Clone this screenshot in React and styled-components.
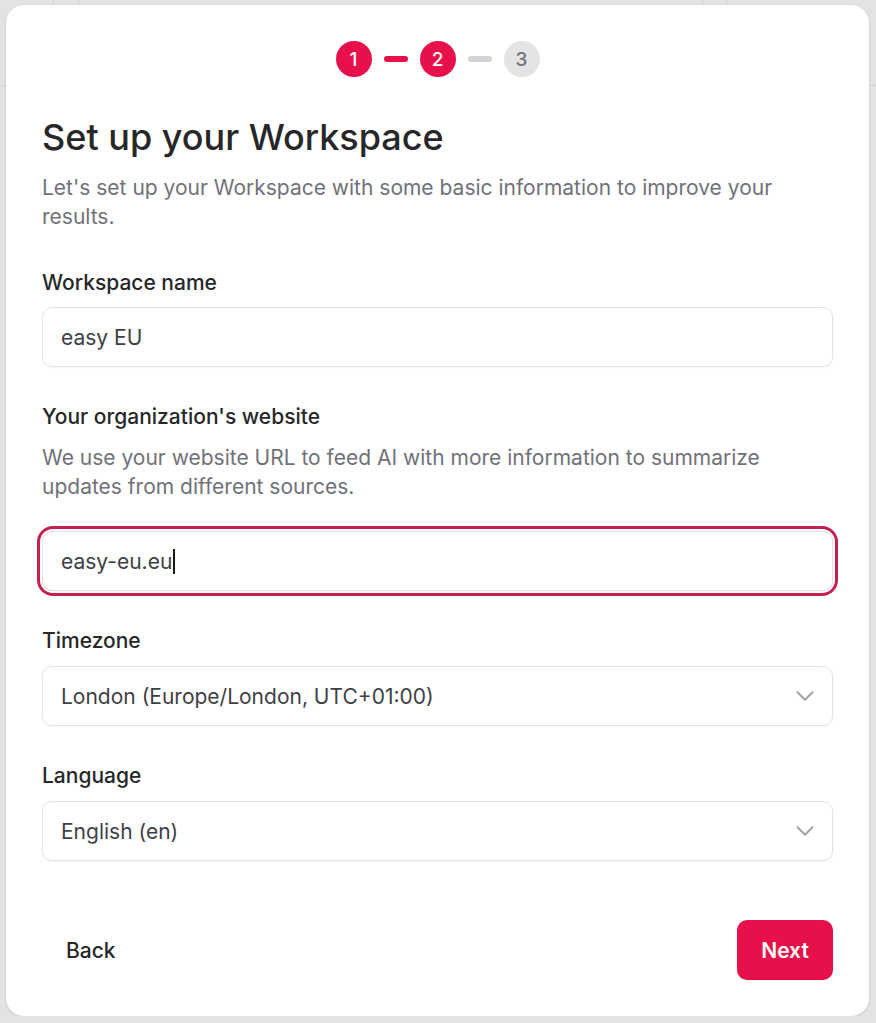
import React, { useState } from 'react';
import styled, { createGlobalStyle } from 'styled-components';
import { ChevronDown } from 'lucide-react';

const GlobalStyle = createGlobalStyle`
  * {
    box-sizing: border-box;
  }

  body {
    margin: 0;
    font-family: 'Inter', 'Noto Sans', sans-serif;
    color: #27272a;
    /* faint grid of the app behind the dialog */
    background-color: #e3e3e3;
    background-image:
      linear-gradient(#d2d2d2, #d2d2d2),
      linear-gradient(#d2d2d2, #d2d2d2),
      linear-gradient(#d2d2d2, #d2d2d2),
      linear-gradient(#d2d2d2, #d2d2d2),
      linear-gradient(#d2d2d2, #d2d2d2);
    background-size: 1px 85px, 1px 85px, 1px 85px, 1px 85px, 100% 1px;
    background-position: 53px 0, 78px 0, 702px 0, 726px 0, 0 85px;
    background-repeat: no-repeat;
  }
`;

const steps = [1, 2, 3];
const currentStep = 2;

const Page = () => {
  const [website, setWebsite] = useState('easy-eu.eu');
  const [name, setName] = useState('easy EU');

  return (
    <>
      <GlobalStyle />
      <Card>
        <Stepper>
          {steps.map((step, index) => (
            <React.Fragment key={step}>
              {index > 0 && <StepDash done={step <= currentStep} />}
              <StepDot done={step <= currentStep}>{step}</StepDot>
            </React.Fragment>
          ))}
        </Stepper>

        <Title>Set up your Workspace</Title>
        <Subtitle>
          Let's set up your Workspace with some basic information to improve your results.
        </Subtitle>

        <Form>
          <Field>
            <Label>Workspace name</Label>
            <Input value={name} onChange={(e) => setName(e.target.value)} />
          </Field>

          <Field>
            <Label>Your organization's website</Label>
            <Hint>
              We use your website URL to feed AI with more information to summarize updates from
              different sources.
            </Hint>
            <InputWrap focused>
              <Input value={website} onChange={(e) => setWebsite(e.target.value)} />
              <Caret />
            </InputWrap>
          </Field>

          <Field>
            <Label>Timezone</Label>
            <Select>
              <span>London (Europe/London, UTC+01:00)</span>
              <ChevronDown size={30} strokeWidth={1.5} color="#a1a1aa" />
            </Select>
          </Field>

          <Field>
            <Label>Language</Label>
            <Select>
              <span>English (en)</span>
              <ChevronDown size={30} strokeWidth={1.5} color="#a1a1aa" />
            </Select>
          </Field>
        </Form>

        <Footer>
          <GhostButton>Back</GhostButton>
          <PrimaryButton>Next</PrimaryButton>
        </Footer>
      </Card>
    </>
  );
};

const Card = styled.div`
  margin: 5px 0 0 6px;
  width: 863px;
  height: 1011px;
  background: #ffffff;
  border-radius: 18px;
  box-shadow: 0 1px 3px rgba(0, 0, 0, 0.12);
  padding: 36px;
  display: flex;
  flex-direction: column;
`;

const Stepper = styled.div`
  display: flex;
  justify-content: center;
  align-items: center;
  gap: 12px;
  margin-bottom: 38px;
`;

const StepDot = styled.div`
  width: 36px;
  height: 36px;
  border-radius: 50%;
  display: flex;
  align-items: center;
  justify-content: center;
  font-size: 19px;
  font-weight: 500;
  background: ${(props) => (props.done ? '#e8104a' : '#e4e4e7')};
  color: ${(props) => (props.done ? '#ffffff' : '#71717a')};
`;

const StepDash = styled.div`
  width: 24px;
  height: 6px;
  border-radius: 3px;
  background: ${(props) => (props.done ? '#e8104a' : '#d4d4d8')};
`;

const Title = styled.h1`
  margin: 0;
  font-size: 36px;
  line-height: 44px;
  font-weight: 500;
  color: #27272a;
`;

const Subtitle = styled.p`
  margin: 13.5px 0 0;
  font-size: 21px;
  line-height: 29px;
  color: #71717a;
`;

const Form = styled.div`
  margin-top: 38.5px;
  display: flex;
  flex-direction: column;
  gap: 36px;
`;

const Field = styled.div`
  display: flex;
  flex-direction: column;
`;

const Label = styled.label`
  font-size: 21px;
  line-height: 28px;
  font-weight: 500;
  color: #27272a;
  margin-bottom: 10px;
`;

const Hint = styled.p`
  margin: 1.5px 0 30.5px;
  font-size: 21px;
  line-height: 29px;
  color: #71717a;
`;

const InputWrap = styled.div`
  position: relative;
  border-radius: 11px;
  box-shadow: ${(props) =>
    props.focused ? '0 0 0 2px #ffffff, 0 0 0 5px #c51f4f' : 'none'};
`;

const Input = styled.input`
  width: 100%;
  height: 60px;
  border: 1px solid #e4e4e7;
  border-radius: 10px;
  padding: 0 18px;
  font-family: inherit;
  font-size: 21px;
  color: #3f3f46;
  background: #ffffff;
  outline: none;
  box-shadow: 0 1px 2px rgba(0, 0, 0, 0.04);
`;

/* text cursor drawn after the typed value */
const Caret = styled.span`
  position: absolute;
  left: 131px;
  top: 18px;
  width: 2px;
  height: 25px;
  background: #18181b;
`;

const Select = styled.div`
  height: 60px;
  margin-top: 1px;
  border: 1px solid #e4e4e7;
  border-radius: 10px;
  padding: 0 12px 0 18px;
  display: flex;
  align-items: center;
  justify-content: space-between;
  font-size: 21px;
  color: #3f3f46;
  box-shadow: 0 1px 2px rgba(0, 0, 0, 0.04);
`;

const Footer = styled.div`
  margin-top: auto;
  display: flex;
  justify-content: space-between;
  align-items: center;
`;

const GhostButton = styled.button`
  height: 60px;
  padding: 0 24px;
  border: none;
  background: transparent;
  font-family: inherit;
  font-size: 21px;
  font-weight: 500;
  color: #27272a;
  cursor: pointer;
`;

const PrimaryButton = styled.button`
  height: 60px;
  width: 96px;
  border: none;
  border-radius: 10px;
  background: #e8104a;
  color: #ffffff;
  font-family: inherit;
  font-size: 21px;
  font-weight: 600;
  cursor: pointer;
  box-shadow: inset 0 -1px 0 rgba(0, 0, 0, 0.08);
`;

export default Page;
